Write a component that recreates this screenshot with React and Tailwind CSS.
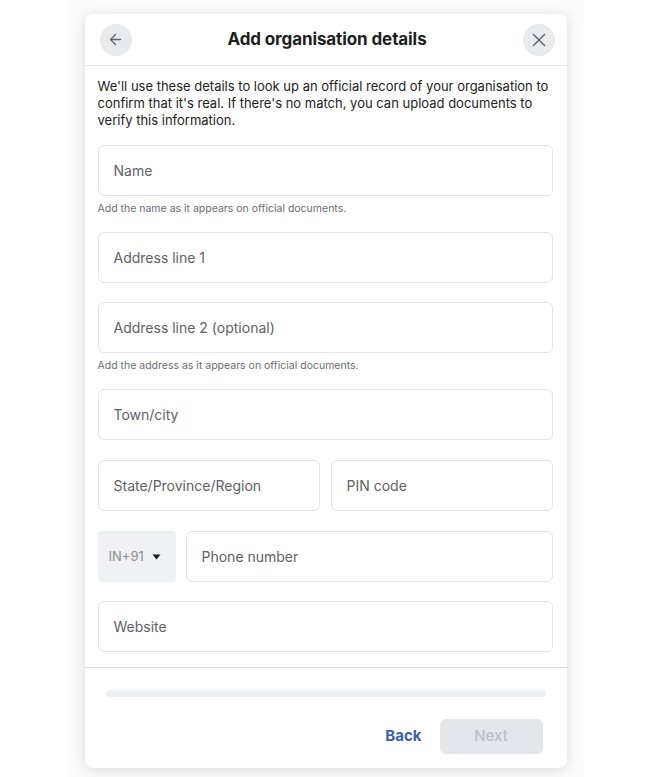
import { ArrowLeft, X } from 'lucide-react';

const font = { fontFamily: '"Inter", "Liberation Sans", sans-serif' };

function Field({ label, className = '' }) {
    return (
        <div
            className={`h-[51px] shrink-0 flex items-center pl-[15px] rounded-[6px] border border-[#e2e4e8] bg-white text-[14px] text-[#606266] ${className}`}
        >
            {label}
        </div>
    );
}

function Hint({ children }) {
    return <p className="mt-[6px] mb-[17px] text-[10.5px] leading-[13px] text-[#6b6e73]">{children}</p>;
}

export default function App() {
    return (
        <div className="w-[651px] h-[777px] bg-white flex justify-center" style={font}>
            <div className="w-[518px] h-full bg-[#fcfcfc] flex justify-center pt-[14px]">
                <div className="w-[482px] h-[754px] bg-white rounded-[8px] shadow-[0_2px_14px_rgba(0,0,0,0.14)] flex flex-col overflow-hidden">
                    {/* header */}
                    <div className="h-[52px] shrink-0 flex items-center justify-between pl-[15px] pr-[12px] border-b border-[#e4e6ea]">
                        <button className="w-[32px] h-[32px] rounded-full bg-[#e9eaee] flex items-center justify-center text-[#5f636a]">
                            <ArrowLeft size={17} strokeWidth={1.8} />
                        </button>
                        <h1 className="text-[17px] font-bold text-[#1c1e21] tracking-[-0.1px]">Add organisation details</h1>
                        <button className="w-[32px] h-[32px] rounded-full bg-[#e9eaee] flex items-center justify-center text-[#5f636a]">
                            <X size={22} strokeWidth={1.5} />
                        </button>
                    </div>

                    {/* body */}
                    <div className="flex-1 min-h-0 flex flex-col pl-[13px] pr-[14px] pt-[12px] border-b border-[#dcdee2]">
                        <p className="text-[13px] leading-[17px] text-[#1c1e21] mb-[16px]">
                            We'll use these details to look up an official record of your organisation to confirm that
                            it's real. If there's no match, you can upload documents to verify this information.
                        </p>

                        <Field label="Name" />
                        <Hint>Add the name as it appears on official documents.</Hint>

                        <Field label="Address line 1" />
                        <Field label="Address line 2 (optional)" className="mt-[19px]" />
                        <Hint>Add the address as it appears on official documents.</Hint>

                        <Field label="Town/city" />

                        <div className="mt-[20px] flex gap-[11px]">
                            <Field label="State/Province/Region" className="flex-1" />
                            <Field label="PIN code" className="flex-1" />
                        </div>

                        <div className="mt-[20px] flex gap-[10px]">
                            <div className="w-[78px] h-[51px] rounded-[4px] bg-[#f0f1f4] flex items-center pl-[11px] gap-[8px] text-[13px] text-[#8d9096]">
                                IN+91
                                <svg width="9" height="6" viewBox="0 0 9 6">
                                    <path d="M0.5 0.5h8L4.5 5.5z" fill="#1c1e21" />
                                </svg>
                            </div>
                            <Field label="Phone number" className="flex-1 border-[#c9ccd1]" />
                        </div>

                        <Field label="Website" className="mt-[19px]" />
                    </div>

                    {/* footer */}
                    <div className="h-[100px] shrink-0 flex flex-col px-[21px] pt-[22px]">
                        <div className="h-[7px] rounded-full bg-[#eef0f3]" />
                        <div className="mt-[22px] flex items-center justify-end gap-[18px] pr-[3px]">
                            <span className="text-[15px] font-bold text-[#3a62a7]">Back</span>
                            <button className="w-[103px] h-[35px] rounded-[6px] bg-[#e4e6eb] text-[15px] font-medium text-[#bcc0c4]">
                                Next
                            </button>
                        </div>
                    </div>
                </div>
            </div>
        </div>
    );
}
